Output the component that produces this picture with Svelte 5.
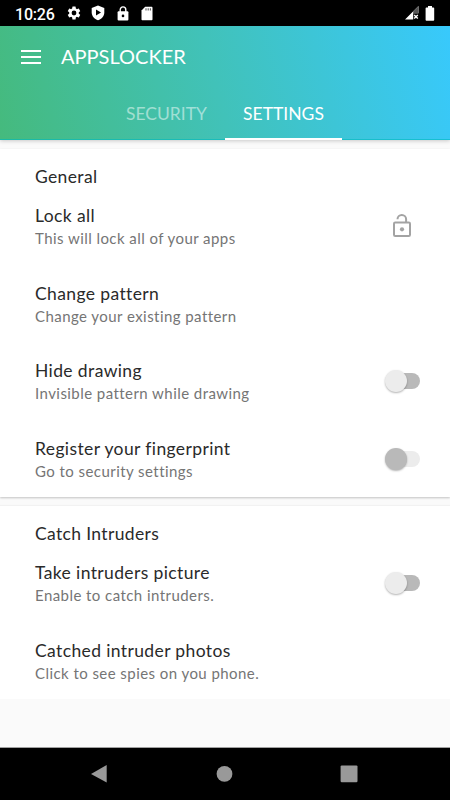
<script lang="ts">
  interface Row {
    title: string;
    detail: string;
    control?: 'lock' | 'switch' | 'switch-disabled';
  }

  interface Section {
    heading: string;
    rows: Row[];
  }

  const tabs = ['SECURITY', 'SETTINGS'];
  let activeTab = $state('SETTINGS');

  const sections: Section[] = [
    {
      heading: 'General',
      rows: [
        { title: 'Lock all', detail: 'This will lock all of your apps', control: 'lock' },
        { title: 'Change pattern', detail: 'Change your existing pattern' },
        { title: 'Hide drawing', detail: 'Invisible pattern while drawing', control: 'switch' },
        { title: 'Register your fingerprint', detail: 'Go to security settings', control: 'switch-disabled' }
      ]
    },
    {
      heading: 'Catch Intruders',
      rows: [
        { title: 'Take intruders picture', detail: 'Enable to catch intruders.', control: 'switch' },
        { title: 'Catched intruder photos', detail: 'Click to see spies on you phone.' }
      ]
    }
  ];
</script>

<div class="screen">
  <div class="status-bar">
    <span class="clock">10:26</span>
    <svg class="gear" width="16" height="16" viewBox="0 0 24 24" fill="#fff">
      <path d="M19.14 12.94c.04-.3.06-.61.06-.94s-.02-.64-.07-.94l2.03-1.58a.49.49 0 0 0 .12-.61l-1.92-3.32a.49.49 0 0 0-.59-.22l-2.39.96a7 7 0 0 0-1.62-.94l-.36-2.54a.48.48 0 0 0-.48-.41h-3.84a.47.47 0 0 0-.47.41l-.36 2.54c-.59.24-1.13.57-1.62.94l-2.39-.96a.48.48 0 0 0-.59.22L2.74 8.87a.47.47 0 0 0 .12.61l2.03 1.58c-.05.3-.09.63-.09.94s.02.64.07.94l-2.03 1.58a.49.49 0 0 0-.12.61l1.92 3.32c.12.22.37.29.59.22l2.39-.96c.5.38 1.03.7 1.62.94l.36 2.54c.05.24.24.41.48.41h3.84c.24 0 .44-.17.47-.41l.36-2.54a7 7 0 0 0 1.62-.94l2.39.96c.22.08.47 0 .59-.22l1.92-3.32a.47.47 0 0 0-.12-.61zM12 15.6a3.6 3.6 0 1 1 0-7.2 3.6 3.6 0 0 1 0 7.2z" />
    </svg>
    <svg class="shield" width="14" height="16" viewBox="0 0 14 16">
      <path d="M7 .5 13.3 3v4.5c0 3.600-2.600 6.600-6.300 7.800C3.300 14.100.7 11.100.7 7.500V3z" fill="#fff" />
      <path d="M5 4.500v6l5-3z" fill="#000" />
    </svg>
    <svg class="padlock" width="12" height="15" viewBox="0 0 12 15">
      <path d="M3.200 6V3.700a2.800 2.800 0 0 1 5.600 0V6" fill="none" stroke="#fff" stroke-width="1.400" />
      <rect x=".6" y="5.300" width="10.800" height="9.200" rx="1" fill="#fff" />
      <circle cx="6" cy="9.900" r="1.300" fill="#000" />
    </svg>
    <svg class="sd-card" width="12" height="15" viewBox="0 0 12 15">
      <path d="M4.200.7h6.200c.7 0 1.100.4 1.100 1.100v11.400c0 .7-.4 1.100-1.100 1.100H1.600c-.7 0-1.100-.4-1.100-1.100V4.600z" fill="#fff" />
      <path d="M5 2.200v2.300M7.200 2.200v2.300M9.400 2.200v2.300" stroke="#666" stroke-width="1.200" />
    </svg>
    <svg class="signal" width="14" height="14" viewBox="0 0 14 14">
      <path d="M13.500 0v7.200H8.200v6.200H0z" fill="#fff" />
      <path d="M13.500 0v7.200H8.200V5.300z" fill="#555" />
      <path d="m9.200 8.900 3.600 3.600m0-3.600-3.600 3.600" stroke="#fff" stroke-width="1.400" />
    </svg>
    <svg class="battery" width="10" height="15" viewBox="0 0 10 15" fill="#fff">
      <path d="M3 0h4v1.400h1.400c.4 0 .8.400.8.800v11.800c0 .4-.4.800-.8.800H1.400c-.4 0-.8-.4-.8-.8V2.200c0-.4.400-.8.800-.8H3z" />
    </svg>
  </div>

  <header class="app-bar">
    <div class="toolbar">
      <button class="menu" aria-label="Menu">
        <span></span>
        <span></span>
        <span></span>
      </button>
      <h1>APPSLOCKER</h1>
    </div>
    <nav class="tabs">
      {#each tabs as tab}
        <button class="tab" class:active={activeTab === tab} onclick={() => (activeTab = tab)}>{tab}</button>
      {/each}
    </nav>
  </header>

  <main>
    {#each sections as section}
      <section class="card">
        <h2>{section.heading}</h2>
        {#each section.rows as row}
          <div class="row">
            <div class="text">
              <div class="title">{row.title}</div>
              <div class="detail">{row.detail}</div>
            </div>
            {#if row.control === 'lock'}
              <svg class="open-lock" width="20" height="26" viewBox="0 0 20 26">
                <path d="M5.500 6.300a4.300 4.300 0 0 1 8.600 0V10" fill="none" stroke="#a3a3a3" stroke-width="2" />
                <rect x="2" y="9.500" width="16" height="13.500" rx="1.200" fill="none" stroke="#a3a3a3" stroke-width="2" />
                <circle cx="10" cy="16.300" r="2.100" fill="#a3a3a3" />
              </svg>
            {:else if row.control}
              <span class="switch" class:disabled={row.control === 'switch-disabled'}>
                <span class="thumb"></span>
              </span>
            {/if}
          </div>
        {/each}
      </section>
    {/each}
  </main>

  <div class="nav-bar">
    <svg width="18" height="20" viewBox="0 0 18 20" fill="#999"><path d="M16.700 1.100v17.500L1 9.900z" /></svg>
    <svg width="18" height="20" viewBox="0 0 18 20" fill="#999"><circle cx="9.500" cy="9.900" r="7.900" /></svg>
    <svg width="18" height="20" viewBox="0 0 18 20" fill="#999"><rect x=".6" y="1.400" width="16.900" height="16.900" rx="1.200" /></svg>
  </div>
</div>

<style>
  .screen {
    display: flex;
    flex-direction: column;
    width: 450px;
    height: 800px;
    overflow: hidden;
    background: #fafafa;
    font-family: Lato, 'Open Sans', sans-serif;
    color: #2a2a2a;
  }

  button {
    border: 0;
    padding: 0;
    background: none;
    font: inherit;
    color: inherit;
  }

  .status-bar {
    display: flex;
    align-items: center;
    height: 26px;
    flex-shrink: 0;
    box-sizing: border-box;
    padding-left: 15px;
    padding-right: 15px;
    background: #000;
    color: #fff;
  }

  .clock {
    width: 51px;
    font: 500 16px/24px Roboto, sans-serif;
    letter-spacing: -0.2px;
    padding-top: 3px;
  }

  .shield {
    margin-left: 9px;
  }

  .padlock {
    margin-left: 12px;
  }

  .sd-card {
    margin-left: 12px;
  }

  .signal {
    margin-left: auto;
    margin-right: 6px;
  }

  .app-bar {
    display: flex;
    flex-direction: column;
    justify-content: space-between;
    height: 114px;
    flex-shrink: 0;
    box-sizing: border-box;
    background: linear-gradient(76deg, #45ba7d 0%, #41c2b9 48%, #38c9fc 100%);
    color: #fff;
    box-shadow: inset 0 -1px 0 rgba(0, 185, 190, 0.6), 0 1px 4px rgba(0, 0, 0, 0.2);
  }

  .toolbar {
    display: flex;
    align-items: center;
    height: 62px;
    padding-left: 21px;
  }

  .menu {
    display: flex;
    flex-direction: column;
    gap: 4px;
    width: 20px;
    margin-right: 20px;
  }

  .menu span {
    height: 2px;
    background: #fff;
  }

  h1 {
    margin: 0;
    padding-bottom: 2px;
    font-size: 20px;
    font-weight: 400;
    letter-spacing: 0;
  }

  .tabs {
    display: flex;
    justify-content: center;
  }

  .tab {
    height: 52px;
    width: 117px;
    font-size: 17.5px;
    color: rgba(255, 255, 255, 0.5);
    border-bottom: 2px solid transparent;
    box-sizing: border-box;
  }

  .tab.active {
    color: #fff;
    border-bottom-color: #fff;
  }

  main {
    flex: 1;
    padding-top: 9px;
  }

  .card {
    background: #fff;
    margin-bottom: 8.5px;
    box-shadow: 0 1px 2px rgba(0, 0, 0, 0.22);
  }

  .card:last-child {
    box-shadow: 0 -1px 1px rgba(0, 0, 0, 0.03);
  }

  h2 {
    margin: 0;
    padding: 16px 0 0 35px;
    height: 22.4px;
    font-size: 17.5px;
    line-height: 24px;
    font-weight: 400;
    letter-spacing: 0.35px;
  }

  .row {
    display: flex;
    align-items: center;
    justify-content: space-between;
    height: 77.5px;
    padding: 0 30px 0 35px;
  }

  .text {
    padding-top: 1px;
  }

  .title {
    font-size: 17.5px;
    line-height: 24px;
    letter-spacing: 0.38px;
  }

  .detail {
    font-size: 15px;
    line-height: 21px;
    letter-spacing: 0.44px;
    color: #757575;
  }

  .open-lock {
    margin-right: 8px;
  }

  .switch {
    position: relative;
    width: 28px;
    height: 16px;
    border-radius: 8px;
    background: #b9b9b9;
  }

  .thumb {
    position: absolute;
    left: -7px;
    top: -3px;
    width: 22px;
    height: 22px;
    border-radius: 50%;
    background: #ececec;
    box-shadow: 0 1px 2px rgba(0, 0, 0, 0.3);
  }

  .switch.disabled {
    background: #ececec;
  }

  .switch.disabled .thumb {
    background: #b9b9b9;
  }

  .nav-bar {
    display: flex;
    align-items: center;
    justify-content: space-between;
    height: 53px;
    flex-shrink: 0;
    box-sizing: border-box;
    padding: 0 92px 1px 90px;
    background: #000;
    border-top: 1px solid #a0a0a0;
  }
</style>
